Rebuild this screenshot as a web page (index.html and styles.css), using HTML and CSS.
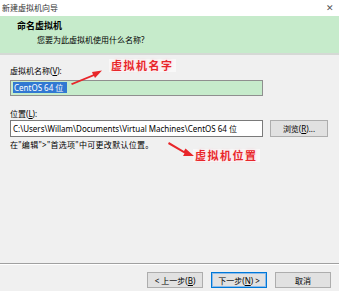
FILE: index.html
```html
<!DOCTYPE html>
<html lang="zh-CN">
<head>
    <meta charset="UTF-8">
    <title>新建虚拟机向导</title>
    <link rel="stylesheet" href="styles.css">
</head>
<body>
    <div class="wizard">
        <!-- Title bar -->
        <div class="titlebar">
            <span class="title">新建虚拟机向导</span>
            <span class="close">&#x2715;</span>
        </div>

        <!-- Header -->
        <div class="header">
            <div class="header-title">命名虚拟机</div>
            <div class="header-sub">您要为此虚拟机使用什么名称?</div>
        </div>

        <!-- Body -->
        <div class="content">
            <label class="field-label">虚拟机名称(<u>V</u>):</label>
            <div class="input input-name"><span class="selected">CentOS 64 位</span></div>

            <label class="field-label label-loc">位置(<u>L</u>):</label>
            <div class="loc-row">
                <div class="input input-loc">C:\Users\Willam\Documents\Virtual Machines\CentOS 64 位</div>
                <button class="btn btn-browse">浏览(<u>R</u>)...</button>
            </div>
            <div class="hint">在"编辑"&gt;"首选项"中可更改默认位置。</div>

            <!-- annotations -->
            <div class="note note-name">虚拟机名字</div>
            <div class="note note-loc">虚拟机位置</div>
            <svg class="arrow arrow-name" width="34" height="16" viewBox="0 0 34 16">
                <path d="M1 14.5 L23 5.5 L22 3 L32 1.5 L25 9 L24 7 L2 16 Z" fill="#e8262a"/>
            </svg>
            <svg class="arrow arrow-loc" width="28" height="18" viewBox="0 0 28 18">
                <path d="M1 1 L16 10 L17.5 7.5 L26 15 L15 15 L16.5 12.5 L0 3 Z" fill="#e8262a"/>
            </svg>
        </div>

        <!-- Footer -->
        <div class="footer">
            <button class="btn">&lt; 上一步(<u>B</u>)</button>
            <button class="btn btn-default">下一步(<u>N</u>) &gt;</button>
            <button class="btn">取消</button>
        </div>
    </div>
</body>
</html>
```

FILE: styles.css
```css
* {
    margin: 0;
    padding: 0;
    box-sizing: border-box;
}
body {
    font-family: "Noto Sans", "Noto Sans CJK SC", sans-serif;
    font-size: 8px;
    color: #000;
    background: #f0f0f0;
    width: 339px;
    height: 291px;
    overflow: hidden;
}
u {
    text-decoration: underline;
}

.wizard {
    display: flex;
    flex-direction: column;
    height: 291px;
}

/* Title bar */
.titlebar {
    height: 16px;
    background: #fff;
    display: flex;
    justify-content: space-between;
    align-items: center;
    padding: 0 5px 2px 2px;
}
.title {
    color: #333;
}
.close {
    font-size: 9px;
    color: #555;
}

/* Header */
.header {
    background: #c6ebcb;
    height: 39px;
    padding: 3px 0 0 17px;
    border-bottom: 2px solid #d5d9d5;
}
.header-title {
    font-weight: bold;
    font-size: 9px;
    line-height: 14px;
}
.header-sub {
    padding-left: 20px;
    line-height: 14px;
}

/* Content */
.content {
    position: relative;
    flex: 1;
    padding: 10px 0 0 10px;
}
.field-label {
    display: block;
    line-height: 12px;
    margin-bottom: 3px;
}
.label-loc {
    margin-top: 12px;
    margin-bottom: 0;
}
.input {
    width: 253px;
    height: 16px;
    border: 1px solid #a0a0a0;
    line-height: 14px;
    padding: 0 2px;
    white-space: nowrap;
    overflow: hidden;
}
.input-name {
    background: #c6ebcb;
    border-color: #8f8f8f;
}
.selected {
    background: #3178d2;
    color: #fff;
    padding: 0 4px 0 1px;
}
.input-loc {
    height: 17px;
    line-height: 15px;
    background: #fff;
    border-color: #7a7a7a;
}
.loc-row {
    display: flex;
    gap: 7px;
    align-items: center;
}
.hint {
    margin-top: 2px;
    line-height: 12px;
    letter-spacing: 0.3px;
}

/* Buttons */
.btn {
    font-family: inherit;
    font-size: 8px;
    height: 16px;
    width: 56px;
    background: #e1e1e1;
    border: 1px solid #adadad;
    color: #000;
    white-space: nowrap;
}
.btn-browse {
    width: 58px;
    height: 17px;
}
.btn-default {
    border: 1px solid #0078d7;
    box-shadow: inset 0 0 0 1px #8cbbea;
}

/* Footer */
.footer {
    height: 28px;
    border-top: 1px solid #a0a0a0;
    box-shadow: inset 0 1px 0 #fff;
    display: flex;
    justify-content: flex-end;
    align-items: flex-start;
    gap: 8px;
    padding: 8px 8px 0 0;
}

/* Annotations */
.note {
    position: absolute;
    color: #e8262a;
    font-weight: bold;
    font-size: 11px;
    line-height: 13px;
    font-family: "Noto Sans CJK SC", sans-serif;
    letter-spacing: 1.5px;
    padding: 0 2px;
    background: rgba(255, 255, 255, 0.5);
    text-shadow: 0 0 2px #fff, 0 0 3px #f4b6bf, 1px 1px 0 #fff;
}
.note-name {
    left: 109px;
    top: 4px;
}
.note-loc {
    left: 193px;
    top: 94px;
}
.arrow {
    position: absolute;
}
.arrow-name {
    left: 70px;
    top: 14px;
}
.arrow-loc {
    left: 168px;
    top: 86px;
}
```
